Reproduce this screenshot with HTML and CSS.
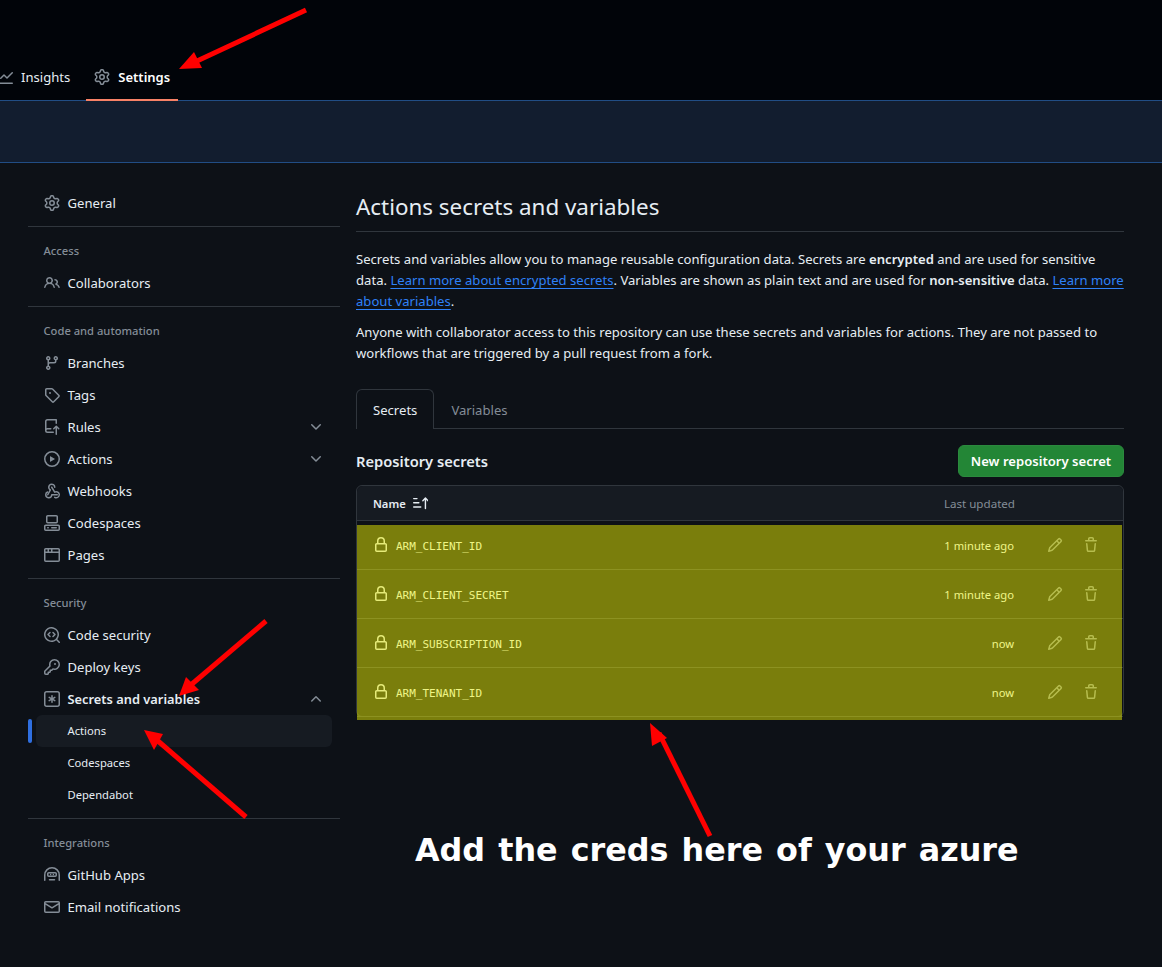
FILE: index.html
```html
<!DOCTYPE html>
<html lang="en">
<head>
<meta charset="utf-8">
<title>Actions secrets and variables</title>
<link rel="stylesheet" href="styles.css">
</head>
<body>
<svg width="0" height="0" class="defs">
  <defs>
    <symbol id="i-gear" viewBox="0 0 16 16"><path d="M8 0a8.2 8.2 0 0 1 .701.031C9.444.095 9.99.645 10.16 1.29l.288 1.107c.018.066.079.158.212.224.231.114.454.243.668.386.123.082.233.09.299.071l1.103-.303c.644-.176 1.392.021 1.82.63.27.385.506.792.704 1.218.315.675.111 1.422-.364 1.891l-.814.806c-.049.048-.098.147-.088.294.016.257.016.515 0 .772-.01.147.038.246.088.294l.814.806c.475.469.679 1.216.364 1.891a7.977 7.977 0 0 1-.704 1.217c-.428.61-1.176.807-1.82.63l-1.102-.302c-.067-.019-.177-.011-.3.071a5.909 5.909 0 0 1-.668.386c-.133.066-.194.158-.211.224l-.29 1.106c-.168.646-.715 1.196-1.458 1.26a8.006 8.006 0 0 1-1.402 0c-.743-.064-1.289-.614-1.458-1.26l-.289-1.106c-.018-.066-.079-.158-.212-.224a5.738 5.738 0 0 1-.668-.386c-.123-.082-.233-.09-.299-.071l-1.103.303c-.644.176-1.392-.021-1.82-.63a8.12 8.12 0 0 1-.704-1.218c-.315-.675-.111-1.422.363-1.891l.815-.806c.05-.048.098-.147.088-.294a6.214 6.214 0 0 1 0-.772c.01-.147-.038-.246-.088-.294l-.815-.806C.635 6.045.431 5.298.746 4.623a7.92 7.92 0 0 1 .704-1.217c.428-.61 1.176-.807 1.82-.63l1.102.302c.067.019.177.011.3-.071.214-.143.437-.272.668-.386.133-.066.194-.158.211-.224l.29-1.106C6.009.645 6.556.095 7.299.03 7.53.01 7.764 0 8 0Zm-.571 1.525c-.036.003-.108.036-.137.146l-.289 1.105c-.147.561-.549.967-.998 1.189-.173.086-.34.183-.5.29-.417.278-.97.423-1.529.27l-1.103-.303c-.109-.03-.175.016-.195.045-.22.312-.412.644-.573.99-.014.031-.021.11.059.19l.815.806c.411.406.562.957.53 1.456a4.709 4.709 0 0 0 0 .582c.032.499-.119 1.05-.53 1.456l-.815.806c-.081.08-.073.159-.059.19.162.346.353.677.573.989.02.03.085.076.195.046l1.102-.303c.56-.153 1.113-.008 1.53.27.161.107.328.204.501.29.447.222.85.629.997 1.189l.289 1.105c.029.109.101.143.137.146a6.6 6.6 0 0 0 1.142 0c.036-.003.108-.036.137-.146l.289-1.105c.147-.561.549-.967.998-1.189.173-.086.34-.183.5-.29.417-.278.97-.423 1.529-.27l1.103.303c.109.029.175-.016.195-.045.22-.313.411-.644.573-.99.014-.031.021-.11-.059-.19l-.815-.806c-.411-.406-.562-.957-.53-1.456a4.709 4.709 0 0 0 0-.582c-.032-.499.119-1.05.53-1.456l.815-.806c.081-.08.073-.159.059-.19a6.464 6.464 0 0 0-.573-.989c-.02-.03-.085-.076-.195-.046l-1.102.303c-.56.153-1.113.008-1.53-.27a4.44 4.44 0 0 0-.501-.29c-.447-.222-.85-.629-.997-1.189l-.289-1.105c-.029-.11-.101-.143-.137-.146a6.6 6.6 0 0 0-1.142 0ZM11 8a3 3 0 1 1-6 0 3 3 0 0 1 6 0ZM9.5 8a1.5 1.5 0 1 0-3.001.001A1.5 1.5 0 0 0 9.5 8Z"/></symbol>
    <symbol id="i-graph" viewBox="0 0 16 16"><path d="M1.5 1.75V13.5h13.75a.75.75 0 0 1 0 1.5H.75a.75.75 0 0 1-.75-.75V1.75a.75.75 0 0 1 1.5 0Zm14.28 2.53-5.25 5.25a.75.75 0 0 1-1.06 0L7 7.06 4.28 9.78a.751.751 0 0 1-1.042-.018.751.751 0 0 1-.018-1.042l3.25-3.25a.75.75 0 0 1 1.06 0L10 7.94l4.72-4.72a.751.751 0 0 1 1.042.018.751.751 0 0 1 .018 1.042Z"/></symbol>
    <symbol id="i-people" viewBox="0 0 16 16"><path d="M2 5.5a3.5 3.5 0 1 1 5.898 2.549 5.508 5.508 0 0 1 3.034 4.084.75.75 0 1 1-1.482.235 4 4 0 0 0-7.9 0 .75.75 0 0 1-1.482-.236A5.507 5.507 0 0 1 3.102 8.05 3.493 3.493 0 0 1 2 5.5ZM11 4a3.001 3.001 0 0 1 2.22 5.018 5.01 5.01 0 0 1 2.56 3.012.749.749 0 0 1-.885.954.752.752 0 0 1-.549-.514 3.507 3.507 0 0 0-2.522-2.372.75.75 0 0 1-.574-.73v-.352a.75.75 0 0 1 .416-.672A1.5 1.5 0 0 0 11 5.5.75.75 0 0 1 11 4Zm-5.5-.5a2 2 0 1 0-.001 3.999A2 2 0 0 0 5.5 3.5Z"/></symbol>
    <symbol id="i-branch" viewBox="0 0 16 16"><path d="M9.5 3.25a2.25 2.25 0 1 1 3 2.122V6A2.5 2.5 0 0 1 10 8.5H6a1 1 0 0 0-1 1v1.128a2.251 2.251 0 1 1-1.5 0V5.372a2.25 2.25 0 1 1 1.5 0v1.836A2.493 2.493 0 0 1 6 7h4a1 1 0 0 0 1-1v-.628A2.25 2.25 0 0 1 9.5 3.25Zm-6 0a.75.75 0 1 0 1.5 0 .75.75 0 0 0-1.5 0Zm8.25-.75a.75.75 0 1 0 0 1.5.75.75 0 0 0 0-1.5ZM4.25 12a.75.75 0 1 0 0 1.5.75.75 0 0 0 0-1.5Z"/></symbol>
    <symbol id="i-tag" viewBox="0 0 16 16"><path d="M1 7.775V2.75C1 1.784 1.784 1 2.75 1h5.025c.464 0 .91.184 1.238.513l6.25 6.25a1.75 1.75 0 0 1 0 2.474l-5.026 5.026a1.75 1.75 0 0 1-2.474 0l-6.25-6.25A1.752 1.752 0 0 1 1 7.775Zm1.5 0c0 .066.026.13.073.177l6.25 6.25a.25.25 0 0 0 .354 0l5.025-5.025a.25.25 0 0 0 0-.354l-6.25-6.25a.25.25 0 0 0-.177-.073H2.75a.25.25 0 0 0-.25.25ZM6 5a1 1 0 1 1 0 2 1 1 0 0 1 0-2Z"/></symbol>
    <symbol id="i-rules" viewBox="0 0 16 16"><path d="M1 2.5A2.5 2.5 0 0 1 3.5 0h8.75a.75.75 0 0 1 .75.75v3.5a.75.75 0 0 1-1.5 0V1.5h-8a1 1 0 0 0-1 1v6.708A2.493 2.493 0 0 1 3.5 9h3.25a.75.75 0 0 1 0 1.5H3.5a1 1 0 0 0 0 2h5.75a.75.75 0 0 1 0 1.5H3.5A2.5 2.5 0 0 1 1 11.5Zm13.23 7.79h-.001l-1.224-1.224v6.184a.75.75 0 0 1-1.5 0V9.066L10.28 10.29a.75.75 0 0 1-1.06-1.061l2.505-2.504a.75.75 0 0 1 1.06 0L15.29 9.23a.751.751 0 0 1-.018 1.042.751.751 0 0 1-1.042.018Z"/></symbol>
    <symbol id="i-play" viewBox="0 0 16 16"><path d="M8 0a8 8 0 1 1 0 16A8 8 0 0 1 8 0ZM1.5 8a6.5 6.5 0 1 0 13 0 6.5 6.5 0 0 0-13 0Zm4.879-2.773 4.264 2.559a.25.25 0 0 1 0 .428l-4.264 2.559A.25.25 0 0 1 6 10.559V5.442a.25.25 0 0 1 .379-.215Z"/></symbol>
    <symbol id="i-webhook" viewBox="0 0 16 16"><path d="M5.5 4.25a2.25 2.25 0 0 1 4.5 0 .75.75 0 0 0 1.5 0 3.75 3.75 0 1 0-6.14 2.889l-2.272 4.258a.75.75 0 0 0 1.324.706L7 7.25a.75.75 0 0 0-.309-1.015A2.25 2.25 0 0 1 5.5 4.25Z"/><path d="M7.364 3.607a.75.75 0 0 1 1.03.257l2.608 4.349a3.75 3.75 0 1 1-.628 6.785.75.75 0 0 1 .752-1.299 2.25 2.25 0 1 0-.033-3.88.75.75 0 0 1-1.03-.256L7.107 4.636a.75.75 0 0 1 .257-1.03Z"/><path d="M2.5 11.75a2.25 2.25 0 0 0 4.5 0 .75.75 0 0 1 .75-.75h5.5a.75.75 0 0 1 0 1.5H8.425A3.751 3.751 0 0 1 1 11.75a3.75 3.75 0 0 1 2.25-3.438.75.75 0 1 1 .6 1.374A2.25 2.25 0 0 0 2.5 11.75Z"/></symbol>
    <symbol id="i-codespaces" viewBox="0 0 16 16"><path d="M0 11.25c0-.966.784-1.75 1.75-1.75h12.5c.966 0 1.75.784 1.75 1.75v3A1.75 1.75 0 0 1 14.25 16H1.75A1.75 1.75 0 0 1 0 14.25Zm2-9.5C2 .784 2.784 0 3.75 0h8.5C13.216 0 14 .784 14 1.75v5a1.75 1.75 0 0 1-1.75 1.75h-8.5A1.75 1.75 0 0 1 2 6.75Zm1.75-.25a.25.25 0 0 0-.25.25v5c0 .138.112.25.25.25h8.5a.25.25 0 0 0 .25-.25v-5a.25.25 0 0 0-.25-.25Zm-2 9.5a.25.25 0 0 0-.25.25v3c0 .138.112.25.25.25h12.5a.25.25 0 0 0 .25-.25v-3a.25.25 0 0 0-.25-.25Z"/><path d="M7 12.75a.75.75 0 0 1 .75-.75h4.5a.75.75 0 0 1 0 1.5h-4.5a.75.75 0 0 1-.75-.75Zm-4 0a.75.75 0 0 1 .75-.75h.5a.75.75 0 0 1 0 1.5h-.5a.75.75 0 0 1-.75-.75Z"/></symbol>
    <symbol id="i-browser" viewBox="0 0 16 16"><path d="M0 2.75C0 1.784.784 1 1.75 1h12.5c.966 0 1.75.784 1.75 1.75v10.5A1.75 1.75 0 0 1 14.25 15H1.75A1.75 1.75 0 0 1 0 13.25ZM14.5 6h-13v7.25c0 .138.112.25.25.25h12.5a.25.25 0 0 0 .25-.25Zm-6-3.5v2h6V2.75a.25.25 0 0 0-.25-.25ZM5 2.5v2h2v-2Zm-3.25 0a.25.25 0 0 0-.25.25V4.5h2v-2Z"/></symbol>
    <symbol id="i-codescan" viewBox="0 0 16 16"><path d="M8.47 4.97a.75.75 0 0 0 0 1.06L9.94 7.5 8.47 8.97a.75.75 0 1 0 1.06 1.06l2-2a.75.75 0 0 0 0-1.06l-2-2a.75.75 0 0 0-1.06 0ZM6.53 6.03a.75.75 0 0 0-1.06-1.06l-2 2a.75.75 0 0 0 0 1.06l2 2a.75.75 0 1 0 1.06-1.06L5.06 7.5l1.47-1.47Z"/><path d="M12.246 13.307a7.501 7.501 0 1 1 1.06-1.06l2.474 2.473a.749.749 0 1 1-1.06 1.06ZM1.5 7.5a6.002 6.002 0 0 0 3.608 5.504 6.002 6.002 0 0 0 6.486-1.117.748.748 0 0 1 .292-.293A6 6 0 1 0 1.5 7.5Z"/></symbol>
    <symbol id="i-key" viewBox="0 0 16 16"><path d="M10.5 0a5.499 5.499 0 1 1-1.288 10.848l-.932.932a.749.749 0 0 1-.53.22H7v.75a.749.749 0 0 1-.22.53l-.5.5a.749.749 0 0 1-.53.22H5v.75a.749.749 0 0 1-.22.53l-.5.5a.749.749 0 0 1-.53.22h-2A1.75 1.75 0 0 1 0 14.25v-2c0-.199.079-.389.22-.53l4.932-4.932A5.5 5.5 0 0 1 10.5 0Zm-4 5.5c-.001.431.069.86.205 1.269a.75.75 0 0 1-.181.768L1.5 12.56v1.69c0 .138.112.25.25.25h1.69l.06-.06v-1.19a.75.75 0 0 1 .75-.75h1.19l.06-.06v-1.19a.75.75 0 0 1 .75-.75h1.19l1.023-1.025a.75.75 0 0 1 .768-.18A4 4 0 1 0 6.5 5.5ZM11 6a1 1 0 1 1 0-2 1 1 0 0 1 0 2Z"/></symbol>
    <symbol id="i-asterisk" viewBox="0 0 16 16"><path d="M0 2.75A2.75 2.75 0 0 1 2.75 0h10.5A2.75 2.75 0 0 1 16 2.75v10.5A2.75 2.75 0 0 1 13.25 16H2.75A2.75 2.75 0 0 1 0 13.25ZM2.75 1.5c-.69 0-1.25.56-1.25 1.25v10.5c0 .69.56 1.25 1.25 1.25h10.5c.69 0 1.25-.56 1.25-1.25V2.75c0-.69-.56-1.25-1.25-1.25Z"/><path d="M8 4a.75.75 0 0 1 .75.75V6.7l1.69-.975a.75.75 0 0 1 .75 1.3L9.5 8l1.69.976a.75.75 0 0 1-.75 1.298L8.75 9.299v1.951a.75.75 0 0 1-1.5 0V9.3l-1.69.974a.75.75 0 1 1-.75-1.298L6.5 8l-1.69-.975a.75.75 0 0 1 .75-1.3l1.69.976V4.75A.75.75 0 0 1 8 4Z"/></symbol>
    <symbol id="i-hubot" viewBox="0 0 16 16"><path d="M0 8a8 8 0 0 1 16 0v5.25a.75.75 0 0 1-1.5 0V8a6.5 6.5 0 1 0-13 0v5.25a.75.75 0 0 1-1.5 0Zm3-1.25C3 5.784 3.784 5 4.75 5h6.5c.966 0 1.75.784 1.75 1.75v1.5A1.75 1.75 0 0 1 11.25 10h-6.5A1.75 1.75 0 0 1 3 8.25Zm1.75-.25a.25.25 0 0 0-.25.25v1.5c0 .138.112.25.25.25h6.5a.25.25 0 0 0 .25-.25v-1.5a.25.25 0 0 0-.25-.25Z"/><path d="M6 6.75h1.25v1.5H6Zm2.75 0H10v1.5H8.75ZM5.5 12h5a.75.75 0 0 1 0 1.5h-5a.75.75 0 0 1 0-1.5Z"/></symbol>
    <symbol id="i-mail" viewBox="0 0 16 16"><path d="M1.75 2h12.5c.966 0 1.75.784 1.75 1.75v8.5A1.75 1.75 0 0 1 14.25 14H1.75A1.75 1.75 0 0 1 0 12.25v-8.5C0 2.784.784 2 1.75 2ZM1.5 12.251c0 .138.112.25.25.25h12.5a.25.25 0 0 0 .25-.25V5.809L8.38 9.397a.75.75 0 0 1-.76 0L1.5 5.809v6.442Zm13-8.181v-.32a.25.25 0 0 0-.25-.25H1.75a.25.25 0 0 0-.25.25v.32L8 7.88Z"/></symbol>
    <symbol id="i-lock" viewBox="0 0 16 16"><path d="M4 4a4 4 0 0 1 8 0v2h.25c.966 0 1.75.784 1.75 1.75v5.5A1.75 1.75 0 0 1 12.25 15h-8.5A1.75 1.75 0 0 1 2 13.25v-5.5C2 6.784 2.784 6 3.75 6H4Zm8.25 3.5h-8.5a.25.25 0 0 0-.25.25v5.5c0 .138.112.25.25.25h8.5a.25.25 0 0 0 .25-.25v-5.5a.25.25 0 0 0-.25-.25ZM10.5 6V4a2.5 2.5 0 1 0-5 0v2Z"/></symbol>
    <symbol id="i-pencil" viewBox="0 0 16 16"><path d="M11.013 1.427a1.75 1.75 0 0 1 2.474 0l1.086 1.086a1.75 1.75 0 0 1 0 2.474l-8.61 8.61c-.21.21-.47.364-.756.445l-3.251.93a.75.75 0 0 1-.927-.928l.929-3.25c.081-.286.235-.547.445-.758l8.61-8.61Zm.176 4.823L9.75 4.81l-6.286 6.287a.253.253 0 0 0-.064.108l-.558 1.953 1.953-.558a.253.253 0 0 0 .108-.064Zm1.238-3.763a.25.25 0 0 0-.354 0L10.811 3.75l1.439 1.44 1.263-1.263a.25.25 0 0 0 0-.354Z"/></symbol>
    <symbol id="i-trash" viewBox="0 0 16 16"><path d="M11 1.75V3h2.25a.75.75 0 0 1 0 1.5H2.75a.75.75 0 0 1 0-1.5H5V1.75C5 .784 5.784 0 6.75 0h2.5C10.216 0 11 .784 11 1.75ZM4.496 6.675l.66 6.6a.25.25 0 0 0 .249.225h5.19a.25.25 0 0 0 .249-.225l.66-6.6a.75.75 0 0 1 1.492.149l-.66 6.6A1.748 1.748 0 0 1 10.595 15h-5.19a1.75 1.75 0 0 1-1.741-1.575l-.66-6.6a.75.75 0 1 1 1.492-.15ZM6.5 1.75V3h3V1.75a.25.25 0 0 0-.25-.25h-2.5a.25.25 0 0 0-.25.25Z"/></symbol>
    <symbol id="i-down" viewBox="0 0 16 16"><path d="M12.78 5.22a.749.749 0 0 1 0 1.06l-4.25 4.25a.749.749 0 0 1-1.06 0L3.22 6.28a.749.749 0 1 1 1.06-1.06L8 8.939l3.72-3.719a.749.749 0 0 1 1.06 0Z"/></symbol>
    <symbol id="i-up" viewBox="0 0 16 16"><path d="M3.22 10.53a.749.749 0 0 1 0-1.06l4.25-4.25a.749.749 0 0 1 1.06 0l4.25 4.25a.749.749 0 1 1-1.06 1.06L8 6.811 4.28 10.53a.749.749 0 0 1-1.06 0Z"/></symbol>
    <symbol id="i-sort" viewBox="0 0 16 16"><path d="M0 2.75A.75.75 0 0 1 .75 2h3.5a.75.75 0 0 1 0 1.5H.75A.75.75 0 0 1 0 2.75Zm0 4.5a.75.75 0 0 1 .75-.75h5.5a.75.75 0 0 1 0 1.5H.75A.75.75 0 0 1 0 7.25Zm0 4.5A.75.75 0 0 1 .75 11h7.5a.75.75 0 0 1 0 1.5H.75a.75.75 0 0 1-.75-.75Zm12.5 1.5V4.06l-1.47 1.47a.75.75 0 0 1-1.06-1.06l2.75-2.75a.75.75 0 0 1 1.06 0l2.75 2.75a.75.75 0 1 1-1.06 1.06L14 4.06v9.19a.75.75 0 0 1-1.5 0Z"/></symbol>
  </defs>
</svg>

<header class="topbar">
  <nav class="repo-nav">
    <a class="repo-tab"><svg class="icon"><use href="#i-graph"/></svg><span>Insights</span></a>
    <a class="repo-tab current"><svg class="icon"><use href="#i-gear"/></svg><span>Settings</span></a>
  </nav>
</header>
<div class="band"></div>

<div class="layout">
  <aside class="sidebar">
    <a class="item"><svg class="icon"><use href="#i-gear"/></svg>General</a>
    <hr class="rule">
    <div class="heading">Access</div>
    <a class="item"><svg class="icon"><use href="#i-people"/></svg>Collaborators</a>
    <hr class="rule">
    <div class="heading">Code and automation</div>
    <a class="item"><svg class="icon"><use href="#i-branch"/></svg>Branches</a>
    <a class="item"><svg class="icon"><use href="#i-tag"/></svg>Tags</a>
    <a class="item"><svg class="icon"><use href="#i-rules"/></svg>Rules<svg class="icon chev"><use href="#i-down"/></svg></a>
    <a class="item"><svg class="icon"><use href="#i-play"/></svg>Actions<svg class="icon chev"><use href="#i-down"/></svg></a>
    <a class="item"><svg class="icon"><use href="#i-webhook"/></svg>Webhooks</a>
    <a class="item"><svg class="icon"><use href="#i-codespaces"/></svg>Codespaces</a>
    <a class="item"><svg class="icon"><use href="#i-browser"/></svg>Pages</a>
    <hr class="rule">
    <div class="heading">Security</div>
    <a class="item"><svg class="icon"><use href="#i-codescan"/></svg>Code security</a>
    <a class="item"><svg class="icon"><use href="#i-key"/></svg>Deploy keys</a>
    <a class="item strong"><svg class="icon"><use href="#i-asterisk"/></svg>Secrets and variables<svg class="icon chev"><use href="#i-up"/></svg></a>
    <a class="item sub selected">Actions</a>
    <a class="item sub">Codespaces</a>
    <a class="item sub">Dependabot</a>
    <hr class="rule">
    <div class="heading">Integrations</div>
    <a class="item"><svg class="icon"><use href="#i-hubot"/></svg>GitHub Apps</a>
    <a class="item"><svg class="icon"><use href="#i-mail"/></svg>Email notifications</a>
  </aside>

  <main class="content">
    <h1 class="title">Actions secrets and variables</h1>
    <p class="para">Secrets and variables allow you to manage reusable configuration data. Secrets are <b>encrypted</b> and are used for sensitive<br>data. <a class="link">Learn more about encrypted secrets</a>. Variables are shown as plain text and are used for <b>non-sensitive</b> data. <a class="link">Learn more<br>about variables</a>.</p>
    <p class="para">Anyone with collaborator access to this repository can use these secrets and variables for actions. They are not passed to<br>workflows that are triggered by a pull request from a fork.</p>

    <div class="tabs">
      <a class="tab active">Secrets</a>
      <a class="tab">Variables</a>
    </div>

    <div class="section-head">
      <h2 class="section-title">Repository secrets</h2>
      <a class="btn">New repository secret</a>
    </div>

    <div class="table">
      <div class="thead">
        <span class="th-name">Name</span><svg class="sort"><use href="#i-sort"/></svg>
        <span class="th-date">Last updated</span>
      </div>
      <div class="row">
        <svg class="icon lock"><use href="#i-lock"/></svg><code class="secret">ARM_CLIENT_ID</code>
        <span class="when">1 minute ago</span>
        <svg class="icon act"><use href="#i-pencil"/></svg><svg class="icon act"><use href="#i-trash"/></svg>
      </div>
      <div class="row">
        <svg class="icon lock"><use href="#i-lock"/></svg><code class="secret">ARM_CLIENT_SECRET</code>
        <span class="when">1 minute ago</span>
        <svg class="icon act"><use href="#i-pencil"/></svg><svg class="icon act"><use href="#i-trash"/></svg>
      </div>
      <div class="row">
        <svg class="icon lock"><use href="#i-lock"/></svg><code class="secret">ARM_SUBSCRIPTION_ID</code>
        <span class="when">now</span>
        <svg class="icon act"><use href="#i-pencil"/></svg><svg class="icon act"><use href="#i-trash"/></svg>
      </div>
      <div class="row">
        <svg class="icon lock"><use href="#i-lock"/></svg><code class="secret">ARM_TENANT_ID</code>
        <span class="when">now</span>
        <svg class="icon act"><use href="#i-pencil"/></svg><svg class="icon act"><use href="#i-trash"/></svg>
      </div>
      <div class="highlight"></div>
    </div>
  </main>
</div>

<div class="caption">Add the creds here of your azure</div>
<svg class="arrows" viewBox="0 0 1162 967">
  <path class="shaft" d="M306 10 197 61"/><path class="head" d="M179 69 194 52 202 68Z"/>
  <path class="shaft" d="M266 621 192 684"/><path class="head" d="M179 696 186 677 199 690Z"/>
  <path class="shaft" d="M246 817 158 741"/><path class="head" d="M144 730 163 734 154 750Z"/>
  <path class="shaft" d="M710 836 659 733"/><path class="head" d="M650 723 667 738 652 746Z"/>
</svg>
</body>
</html>
```

FILE: styles.css
```css
* { box-sizing: border-box; }

html, body {
  margin: 0;
  height: 967px;
  overflow: hidden;
}

body {
  position: relative;
  background: #0d1117;
  color: #e6edf3;
  font-family: "Noto Sans", "Open Sans", sans-serif;
  font-size: 13.1px;
  line-height: 21px;
}

.defs { position: absolute; }

.icon {
  width: 16px;
  height: 16px;
  flex: none;
  fill: #848d97;
}

.topbar {
  height: 101px;
  background: #010409;
  border-bottom: 1px solid #214d85;
  display: flex;
  align-items: flex-end;
}

.repo-nav {
  display: flex;
  gap: 8px;
  margin-left: -11px;
  margin-bottom: -1px;
}

.repo-tab {
  display: flex;
  align-items: center;
  gap: 8px;
  height: 47px;
  padding: 0 8px;
  border-bottom: 2px solid transparent;
}

.repo-tab span { padding-top: 2px; }

.repo-tab.current {
  font-size: 13px;
  font-weight: 600;
  border-bottom-color: #f78166;
  color: #fff;
}

.band {
  height: 62px;
  background: #121d2f;
  border-bottom: 1px solid #214d85;
}

.layout {
  display: flex;
  gap: 16px;
  padding: 24px 0 0 28px;
}

.sidebar {
  width: 312px;
  flex: none;
}

.item {
  position: relative;
  display: flex;
  align-items: center;
  gap: 7.5px;
  height: 32px;
  margin: 0 8px;
  padding: 0 8px;
  border-radius: 6px;
}

.item.strong {
  font-size: 12.85px;
  font-weight: 600;
}

.chev { margin-left: auto; }

.item.sub {
  padding: 0 8px 2px 31.5px;
  font-size: 11.2px;
}

.item.selected { background: #161b22; }

.item.selected::before {
  content: "";
  position: absolute;
  left: -8px;
  top: 4px;
  width: 4px;
  height: 24px;
  border-radius: 6px;
  background: #2f6fe0;
}

.rule {
  height: 1px;
  margin: 7px 0 0;
  border: 0;
  background: #30363d;
}

.heading {
  display: flex;
  align-items: center;
  height: 32px;
  margin-top: 8px;
  padding: 0 0 2px 15.5px;
  font-size: 11.2px;
  font-weight: 500;
  color: #848d97;
}

.content {
  width: 768px;
  flex: none;
  padding-top: 5px;
}

.title {
  margin: 0 0 17px;
  padding-bottom: 9px;
  height: 40px;
  border-bottom: 1px solid #30363d;
  font-size: 22.4px;
  line-height: 30px;
  font-weight: 400;
}

.para { margin: 0 0 10px; white-space: nowrap; }
.para b { font-weight: 600; }

.link {
  color: #2f81f7;
  text-decoration: underline;
  text-underline-offset: 3px;
}

.tabs {
  display: flex;
  height: 40px;
  margin-top: 25px;
  border-bottom: 1px solid #30363d;
}

.tab {
  display: flex;
  align-items: center;
  height: 40px;
  padding: 1px 16px 0;
  border: 1px solid transparent;
  border-bottom: 0;
  border-radius: 6px 6px 0 0;
  color: #848d97;
}

.tab.active {
  background: #0d1117;
  border-color: #30363d;
  color: #e6edf3;
}

.section-head {
  display: flex;
  align-items: center;
  justify-content: space-between;
  margin-top: 16px;
}

.section-title {
  margin: 0;
  font-size: 14.7px;
  font-weight: 600;
}

.btn {
  display: flex;
  align-items: center;
  justify-content: center;
  width: 166px;
  height: 32px;
  border-radius: 6px;
  background: #238636;
  border: 1px solid #2b8a3e;
  color: #fff;
  font-weight: 600;
}

.table {
  position: relative;
  margin-top: 8px;
  border: 1px solid #30363d;
  border-radius: 6px;
  height: 232px;
}

.thead {
  display: flex;
  align-items: center;
  height: 35px;
  padding: 0 16px;
  background: #161b22;
  border-bottom: 1px solid #30363d;
  border-radius: 6px 6px 0 0;
  font-size: 11.2px;
}

.th-name { font-weight: 600; }

.sort {
  width: 15px;
  height: 15px;
  margin-left: 7px;
  fill: #e6edf3;
}

.th-date {
  margin-left: auto;
  margin-right: 92px;
  font-size: 11.6px;
  color: #848d97;
}

.row {
  display: flex;
  align-items: center;
  height: 49px;
  padding: 0 24px 0 16px;
  border-bottom: 1px solid #30363d;
  font-size: 11.2px;
}

.lock { fill: #d5dbe0; margin-right: 7px; }

.secret {
  padding-top: 2px;
  font-family: "DejaVu Sans Mono", "Liberation Mono", monospace;
  font-size: 11px;
}

.when { margin-left: auto; margin-right: 33px; }

.act { fill: #7d8590; }
.act + .act { margin-left: 20px; }

.highlight {
  position: absolute;
  left: 0;
  right: 1px;
  top: 39px;
  height: 195px;
  background: rgba(250, 255, 0, 0.46);
}

.caption {
  position: absolute;
  left: 415px;
  top: 826px;
  font-family: "DejaVu Sans", sans-serif;
  font-size: 31.8px;
  line-height: 48px;
  font-weight: 700;
  word-spacing: 2px;
  color: #fff;
  white-space: nowrap;
}

.arrows {
  position: absolute;
  left: 0;
  top: 0;
  width: 1162px;
  height: 967px;
  pointer-events: none;
}

.shaft {
  fill: none;
  stroke: #f00;
  stroke-width: 5;
}

.head { fill: #f00; }
```
